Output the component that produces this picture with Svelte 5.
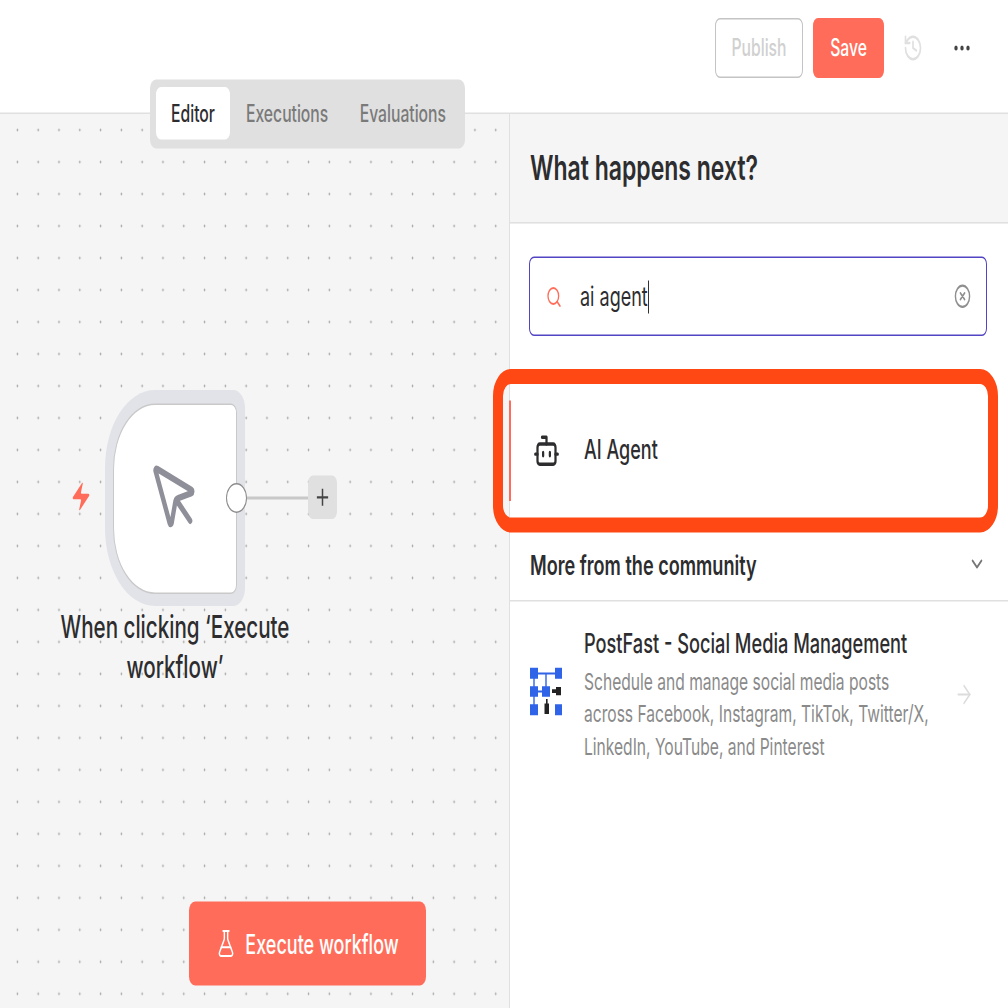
<script>
  // the reference is stretched vertically by 1.5, so the page is laid out at 1008x672 and scaled
  const lines = [
    "Schedule and manage social media posts",
    "across Facebook, Instagram, TikTok, Twitter/X,",
    "LinkedIn, YouTube, and Pinterest",
  ];
</script>

<div class="stage">
  <div class="page">
    <header class="topbar">
      <button class="btn publish" type="button">Publish</button>
      <button class="btn save" type="button">Save</button>
      <svg class="history" viewBox="0 0 24 24" fill="none" stroke="currentColor" stroke-width="2" stroke-linecap="round" stroke-linejoin="round">
        <path d="M3 12a9 9 0 1 0 9-9 9.75 9.75 0 0 0-6.74 2.74L3 8" />
        <path d="M3 3v5h5" />
        <path d="M12 7v5l4 2" />
      </svg>
      <svg class="more" viewBox="0 0 16 6" fill="currentColor">
        <circle cx="2" cy="3" r="1.7" />
        <circle cx="8" cy="3" r="1.7" />
        <circle cx="14" cy="3" r="1.7" />
      </svg>
    </header>

    <div class="tabs">
      <span class="tab active">Editor</span>
      <span class="tab">Executions</span>
      <span class="tab">Evaluations</span>
    </div>

    <main class="body">
      <section class="canvas">
        <svg class="bolt" viewBox="0 0 24 24" fill="currentColor">
          <path d="M4 14a1 1 0 0 1-.78-1.63l9.9-10.2a.5.5 0 0 1 .86.46l-1.92 6.02A1 1 0 0 0 13 10h7a1 1 0 0 1 .78 1.63l-9.9 10.2a.5.5 0 0 1-.86-.46l1.92-6.02A1 1 0 0 0 11 14z" />
        </svg>

        <div class="node">
          <div class="nodeInner">
            <svg class="pointer" viewBox="0 0 24 24" fill="none" stroke="currentColor" stroke-width="2" stroke-linecap="round" stroke-linejoin="round">
              <path d="M12.586 12.586 19 19" />
              <path d="M3.688 3.037a.497.497 0 0 0-.651.651l6.5 15.999a.5.5 0 0 0 .947-.062l1.569-6.083a2 2 0 0 1 1.448-1.479l6.124-1.579a.5.5 0 0 0 .063-.947z" />
            </svg>
          </div>
        </div>
        <div class="handle"></div>
        <div class="wire"></div>
        <div class="plus">
          <svg viewBox="0 0 16 16" fill="none" stroke="currentColor" stroke-width="1.6">
            <path d="M8 2v12M2 8h12" />
          </svg>
        </div>
        <div class="nodeLabel">When clicking ‘Execute<br />workflow’</div>

        <button class="execute" type="button">
          <svg viewBox="0 0 24 24" fill="none" stroke="currentColor" stroke-width="1.7" stroke-linecap="round" stroke-linejoin="round">
            <path d="M14 2v6a2 2 0 0 0 .245.96l5.51 10.08A2 2 0 0 1 18 22H6a2 2 0 0 1-1.755-2.96l5.51-10.08A2 2 0 0 0 10 8V2" />
            <path d="M6.453 15h11.094" />
            <path d="M8.5 2h7" />
          </svg>
          Execute workflow
        </button>
      </section>

      <aside class="panel">
        <div class="panelHead">What happens next?</div>

        <div class="searchWrap">
          <div class="search">
            <svg class="searchIcon" viewBox="0 0 24 24" fill="none" stroke="currentColor" stroke-width="2" stroke-linecap="round">
              <circle cx="11" cy="11" r="8" />
              <path d="m21 21-4.3-4.3" />
            </svg>
            <span class="query">ai agent</span><span class="caret"></span>
            <svg class="clear" viewBox="0 0 24 24" fill="none" stroke="currentColor" stroke-width="2" stroke-linecap="round">
              <circle cx="12" cy="12" r="10" />
              <path d="m15 9-6 6M9 9l6 6" />
            </svg>
          </div>
        </div>

        <div class="agentRow">
          <svg class="bot" viewBox="0 0 24 24" fill="none" stroke="currentColor" stroke-width="2" stroke-linecap="round" stroke-linejoin="round">
            <path d="M12 8V4H8" />
            <rect width="16" height="12" x="4" y="8" rx="2" />
            <path d="M2 14h2M20 14h2M15 13v2M9 13v2" />
          </svg>
          <span class="agentName">AI Agent</span>
        </div>

        <div class="community">
          <span>More from the community</span>
          <svg viewBox="0 0 24 24" fill="none" stroke="currentColor" stroke-width="2" stroke-linecap="round" stroke-linejoin="round">
            <path d="m6 9 6 6 6-6" />
          </svg>
        </div>

        <div class="result">
          <svg class="postfast" viewBox="0 0 32 32">
            <g fill="none" stroke="#2f63e8" stroke-width="1.4">
              <path d="M4 4h28M4 4v24M16 4v12M4 16h12" />
            </g>
            <g fill="#2f63e8">
              <rect x="0" y="0" width="8" height="7.5" />
              <rect x="25" y="0" width="7" height="7.5" />
              <rect x="0" y="12.5" width="8" height="7" />
              <rect x="12" y="12.5" width="8" height="7" />
              <rect x="0" y="24.5" width="8" height="7.5" />
              <rect x="25" y="24.5" width="7" height="7.5" />
            </g>
            <g fill="#222">
              <rect x="26" y="13" width="5" height="5.5" />
              <rect x="22" y="14.5" width="5" height="2.5" />
              <rect x="14.5" y="24" width="4.5" height="7" />
              <rect x="16" y="21" width="1.6" height="4" />
            </g>
          </svg>
          <div class="resultText">
            <div class="resultTitle">PostFast - Social Media Management</div>
            {#each lines as line}
              <div class="resultLine">{line}</div>
            {/each}
          </div>
          <svg class="arrow" viewBox="0 0 24 24" fill="none" stroke="currentColor" stroke-width="1.5" stroke-linecap="round" stroke-linejoin="round">
            <path d="M5 12h14" />
            <path d="m12 5 7 7-7 7" />
          </svg>
        </div>
      </aside>
    </main>

    <div class="callout"></div>
  </div>
</div>

<style>
  :global(body) {
    margin: 0;
    background: #fff;
  }

  .stage {
    width: 1008px;
    height: 1008px;
    overflow: hidden;
  }

  .page {
    position: relative;
    width: 1008px;
    height: 672px;
    transform: scaleY(1.5);
    transform-origin: 0 0;
    font-family: Inter, "Noto Sans", sans-serif;
    color: #2d2d2f;
    display: flex;
    flex-direction: column;
  }

  .topbar {
    flex: none;
    box-sizing: border-box;
    height: 76px;
    padding: 0 38px 12px 0;
    border-bottom: 1px solid #e0e0e0;
    background: #fff;
    display: flex;
    align-items: center;
    justify-content: flex-end;
  }

  .btn {
    height: 40px;
    border-radius: 5px;
    font: 500 15.7px Inter, sans-serif;
    padding: 0;
  }

  .publish {
    width: 88px;
    border: 1px solid #c4c4c4;
    background: #fff;
    color: #d0d0d0;
    margin-right: 10px;
  }

  .save {
    width: 71px;
    border: none;
    background: #ff6d5a;
    color: #fff;
    margin-right: 19px;
  }

  .history {
    width: 20px;
    height: 20px;
    color: #e0e0e0;
    margin-right: 31px;
  }

  .more {
    width: 16px;
    height: 6px;
    color: #444;
  }

  .tabs {
    position: absolute;
    left: 150px;
    top: 53.3px;
    box-sizing: border-box;
    width: 315px;
    height: 45.4px;
    padding: 5px 6px;
    border-radius: 6px;
    background: #e0e0e0;
    display: flex;
    z-index: 2;
  }

  .tab {
    flex: none;
    box-sizing: border-box;
    height: 35px;
    line-height: 35px;
    padding: 0 15.5px 0 16px;
    font-size: 15.7px;
    font-weight: 500;
    color: #7a7a7a;
    border-radius: 5px;
    white-space: nowrap;
  }

  .tab.active {
    width: 74px;
    padding: 0;
    text-align: center;
    background: #fff;
    color: #2d2d2f;
  }

  .body {
    flex: 1;
    display: flex;
    min-height: 0;
  }

  .canvas {
    position: relative;
    flex: none;
    width: 509px;
    background-color: #f5f5f5;
    background-image: radial-gradient(circle, #a8a8a8 0.8px, transparent 1.1px);
    background-size: 20.8px 21.33px;
    background-position: 7px 0;
  }

  .bolt {
    position: absolute;
    left: 70px;
    top: 244px;
    width: 22px;
    height: 22px;
    color: #ff6d5a;
  }

  .node {
    position: absolute;
    left: 105px;
    top: 184px;
    box-sizing: border-box;
    width: 140px;
    height: 144px;
    padding: 8.5px 8px;
    background: #e2e3e8;
    border-radius: 50px 12px 12px 50px / 52px 12px 12px 52px;
  }

  .nodeInner {
    box-sizing: border-box;
    height: 100%;
    background: #fff;
    border: 1px solid #c9c9c9;
    border-radius: 42px 6px 6px 42px / 44px 6px 6px 44px;
    display: flex;
    align-items: center;
    justify-content: center;
  }

  .pointer {
    width: 52px;
    height: 54px;
    color: #8f8f9a;
  }

  .handle {
    position: absolute;
    left: 226px;
    top: 246px;
    box-sizing: border-box;
    width: 21px;
    height: 20px;
    border-radius: 50%;
    background: #fff;
    border: 1.5px solid #8c8c8c;
  }

  .wire {
    position: absolute;
    left: 247px;
    top: 255px;
    width: 62px;
    height: 2px;
    background: #c8c8c8;
  }

  .plus {
    position: absolute;
    left: 308px;
    top: 241px;
    width: 29px;
    height: 29px;
    border-radius: 5px;
    background: #e0e0e0;
    color: #444;
    display: flex;
    align-items: center;
    justify-content: center;
  }

  .plus svg {
    width: 15px;
    height: 15px;
  }

  .nodeLabel {
    position: absolute;
    left: 20px;
    top: 329px;
    width: 310px;
    text-align: center;
    font-size: 20.6px;
    font-weight: 500;
    line-height: 26.7px;
    color: #2d2d2f;
  }

  .execute {
    position: absolute;
    left: 189px;
    top: 525px;
    box-sizing: border-box;
    width: 237px;
    height: 56px;
    padding: 0;
    border: none;
    border-radius: 6px;
    background: #ff6d5a;
    color: #fff;
    font: 500 18px Inter, sans-serif;
    display: flex;
    align-items: center;
    justify-content: center;
    gap: 9px;
  }

  .execute svg {
    width: 20px;
    height: 20px;
  }

  .panel {
    flex: 1;
    min-width: 0;
    box-sizing: border-box;
    border-left: 1px solid #e0e0e0;
    background: #fff;
    display: flex;
    flex-direction: column;
  }

  .panelHead {
    flex: none;
    box-sizing: border-box;
    height: 73px;
    padding: 0 20px;
    line-height: 73px;
    border-bottom: 1px solid #e0e0e0;
    background: #f5f5f5;
    font-size: 23px;
    font-weight: 600;
    color: #2d2d2f;
  }

  .searchWrap {
    flex: none;
    padding: 22px 21px 43px 19px;
  }

  .search {
    box-sizing: border-box;
    height: 53px;
    padding: 0 15px 0 16px;
    border: 1px solid #5145c4;
    border-radius: 5px;
    background: #fff;
    display: flex;
    align-items: center;
  }

  .searchIcon {
    width: 16px;
    height: 16px;
    color: #ff6d5a;
    margin-right: 18px;
  }

  .query {
    font-size: 18px;
    color: #2d2d2f;
  }

  .caret {
    width: 1px;
    height: 22px;
    background: #333;
  }

  .clear {
    width: 17px;
    height: 17px;
    margin-left: auto;
    color: #8f8f8f;
  }

  .agentRow {
    flex: none;
    box-sizing: border-box;
    height: 67px;
    padding-left: 22px;
    border-left: 2px solid #ff6d5a;
    margin-left: -1px;
    display: flex;
    align-items: center;
    gap: 24px;
    font-size: 18px;
    font-weight: 500;
  }

  .agentName {
    margin-bottom: 2px;
  }

  .bot {
    width: 27px;
    height: 27px;
    color: #2d2d2f;
  }

  .community {
    flex: none;
    box-sizing: border-box;
    height: 67px;
    padding: 31px 22px 0 20px;
    border-bottom: 1px solid #e0e0e0;
    display: flex;
    justify-content: space-between;
    font-size: 18.1px;
    font-weight: 600;
  }

  .community svg {
    width: 18px;
    height: 18px;
    color: #777;
    margin-top: 2px;
  }

  .result {
    position: relative;
    padding: 13.5px 0 0 74px;
  }

  .postfast {
    position: absolute;
    left: 20px;
    top: 44px;
    width: 32px;
    height: 32px;
  }

  .resultTitle {
    font-size: 18.2px;
    font-weight: 500;
    line-height: 26px;
    color: #2d2d2f;
  }

  .resultLine {
    font-size: 15.6px;
    line-height: 21.33px;
    color: #8a8a8a;
  }

  .resultTitle + .resultLine {
    margin-top: 3.5px;
  }

  .arrow {
    position: absolute;
    left: 444px;
    top: 51.5px;
    width: 20px;
    height: 20px;
    color: #dcdcdc;
  }

  .callout {
    position: absolute;
    left: 493px;
    top: 246px;
    box-sizing: border-box;
    width: 505px;
    height: 109px;
    border: 10.5px solid #ff4814;
    border-radius: 18px;
    pointer-events: none;
  }
</style>
